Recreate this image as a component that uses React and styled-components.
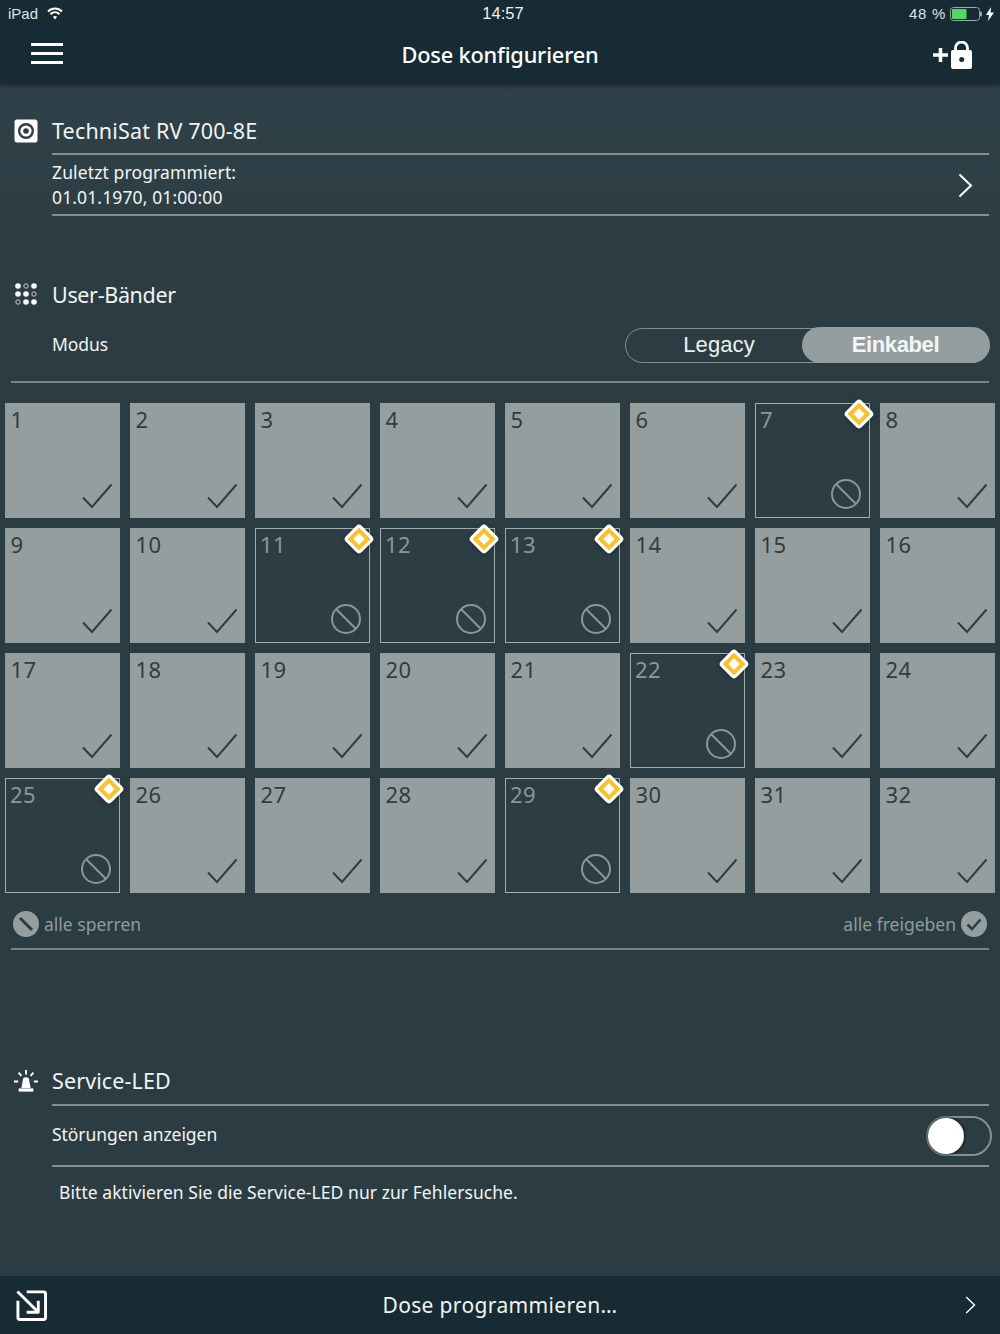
import React from 'react'
import styled, { createGlobalStyle } from 'styled-components'

const Global = createGlobalStyle`
    html, body { margin: 0; padding: 0; background: #2c3d44; }
    * { box-sizing: border-box; }
`

const Page = styled.div`
    width: 1000px;
    height: 1334px;
    display: flex;
    flex-direction: column;
    background: linear-gradient(#2f4148 84px, #2c3c43 300px);
    font-family: "Noto Sans", sans-serif;
    color: #f2f4f4;
    overflow: hidden;
`
const Header = styled.header`
    height: 84px;
    flex: none;
    background: #162b33;
    box-shadow: 0 2px 5px rgba(0, 0, 0, 0.35);
    position: relative;
`
const StatusBar = styled.div`
    height: 27px;
    padding: 0 6px 0 8px;
    display: grid;
    grid-template-columns: 1fr auto 1fr;
    align-items: center;
    font-family: "Liberation Sans", sans-serif;
    font-size: 15px;
    color: #dfe3e4;
`
const StatusLeft = styled.div`
    display: flex;
    align-items: center;
    gap: 9px;
`
const StatusRight = styled.div`
    display: flex;
    align-items: center;
    justify-content: flex-end;
    gap: 4px;
    letter-spacing: 0.7px;
`
const Clock = styled.span`
    font-size: 16.5px;
    margin-left: 4px;
    color: #eef1f1;
`
const NavBar = styled.div`
    height: 57px;
    padding: 0 27px;
    display: grid;
    grid-template-columns: 1fr auto 1fr;
    align-items: center;
`
const NavTitle = styled.h1`
    margin: 0 0 2px 0;
    font-size: 21.8px;
    font-weight: 500;
    color: #fff;
    letter-spacing: -0.2px;
`
const NavEnd = styled.div`
    display: flex;
    justify-content: flex-end;
    margin-bottom: 2px;
`
const NavStart = styled.div`
    display: flex;
    padding-left: 4px;
    margin-bottom: 5px;
`
const Main = styled.main`
    flex: 1;
    display: flex;
    flex-direction: column;
    min-height: 0;
`
const Section = styled.section`
    margin-top: ${(p) => p.$top}px;
`
const SectionHead = styled.div`
    display: flex;
    align-items: center;
    height: ${(p) => p.$h}px;
    padding-left: 14px;
`
const HeadIcon = styled.div`
    width: 24px;
    height: 24px;
    margin-right: 14px;
    display: flex;
    align-items: center;
    justify-content: center;
    flex: none;
`
const HeadText = styled.h2`
    margin: 0 0 ${(p) => p.$lift ?? 2}px 0;
    font-size: 21.5px;
    font-weight: 400;
    letter-spacing: ${(p) => p.$track}px;
    color: #f2f4f4;
`
const InsetRule = styled.div`
    height: 2px;
    background: #84908f;
    margin: 0 11px 0 52px;
`
const WideRule = styled.div`
    height: 2px;
    background: #76858a;
    margin: 0 11px;
`
const InfoRow = styled.div`
    height: 59px;
    margin: 0 27px 0 52px;
    display: flex;
    align-items: center;
    justify-content: space-between;
`
const InfoText = styled.div`
    font-size: 17.5px;
    line-height: 25px;
    letter-spacing: 0.12px;
`
const InfoArrow = styled.div`
    display: flex;
    margin-top: 2px;
`
const ModeRow = styled.div`
    height: 62px;
    margin: 0 11px 5px 52px;
    display: flex;
    align-items: center;
    justify-content: space-between;
`
const RowLabel = styled.span`
    font-size: 17.5px;
    letter-spacing: -0.05px;
    margin-bottom: ${(p) => p.$lift}px;
`
const Segments = styled.div`
    width: 364px;
    height: 35px;
    display: flex;
    border: 1.5px solid #84908f;
    border-radius: 18px;
`
const Segment = styled.div`
    margin: -1.5px;
    display: flex;
    align-items: center;
    justify-content: center;
    border-radius: 18px;
    font-family: "Liberation Sans", sans-serif;
    font-size: 22px;
`
const SegmentOff = styled(Segment)`
    flex: 0 0 180px;
    padding-left: 9px;
    letter-spacing: 0.1px;
    color: #eef1f1;
`
const SegmentOn = styled(Segment)`
    flex: 1;
    letter-spacing: -0.4px;
    font-weight: 700;
    background: #959e9f;
    color: #f4f6f6;
`
const Grid = styled.div`
    margin: 20px 0 0 5px;
    display: grid;
    grid-template-columns: repeat(8, 115px);
    grid-auto-rows: 115px;
    gap: 10px;
`
const Cell = styled.div`
    position: relative;
    background: ${(p) => (p.$blocked ? '#2c3d44' : '#959e9f')};
    border: ${(p) => (p.$blocked ? '1px solid #a3adae' : 'none')};
    color: ${(p) => (p.$blocked ? '#8b9698' : '#2c3d44')};
`
const CellNumber = styled.span`
    position: absolute;
    left: ${(p) => (p.$blocked ? 4 : 5.5)}px;
    top: ${(p) => (p.$blocked ? 0 : 1)}px;
    font-size: 22px;
    line-height: 30px;
    letter-spacing: 0.5px;
`
const CellMark = styled.div`
    position: absolute;
    right: ${(p) => (p.$blocked ? 8 : 7)}px;
    bottom: ${(p) => (p.$blocked ? 8 : 9)}px;
    display: flex;
`
const Badge = styled.svg`
    position: absolute;
    right: -7px;
    top: -7px;
    display: block;
    filter: drop-shadow(0 1px 2px rgba(0, 0, 0, 0.3));
`
const BulkRow = styled.div`
    height: 55px;
    padding-top: 7px;
    margin: 0 13px;
    display: flex;
    align-items: center;
    justify-content: space-between;
    color: #8f9b9d;
    font-size: 17.5px;
`
const BulkAction = styled.div`
    display: flex;
    align-items: center;
    gap: 5px;
`
const Switch = styled.div`
    width: 66px;
    height: 40px;
    border: 2px solid #84908f;
    border-radius: 20px;
    position: relative;
`
const Knob = styled.div`
    position: absolute;
    left: 0;
    top: 0;
    width: 36px;
    height: 36px;
    border-radius: 50%;
    background: #fff;
    box-shadow: 0 0 3px 1px rgba(0, 0, 0, 0.55);
`
const SwitchRow = styled(ModeRow)`
    height: 59px;
    margin: 0 8px 0 52px;
`
const Note = styled.p`
    margin: 13px 0 0 59px;
    font-size: 17.5px;
    line-height: 25px;
    letter-spacing: 0.06px;
`
const Footer = styled.footer`
    height: 58px;
    flex: none;
    background: #162b33;
    display: grid;
    grid-template-columns: 1fr auto 1fr;
    align-items: center;
    padding: 0 15px;
`
const FooterTitle = styled.span`
    font-size: 21px;
    letter-spacing: 0.35px;
    color: #f2f4f4;
`
const FooterEnd = styled.div`
    display: flex;
    justify-content: flex-end;
    padding-right: 9px;
`

const Wifi = () => (
    <svg width="16" height="13" viewBox="0 0 16 13" fill="none" stroke="#fff" strokeWidth="2">
        <path d="M1 4.500c4-4 10-4 14 0" />
        <path d="M3.500 7.200c2.600-2.600 6.400-2.600 9 0" />
        <path d="M8 12.500 5.900 9.800c1.200-1 3-1 4.200 0z" fill="#fff" stroke="none" />
    </svg>
)
const Battery = () => (
    <svg width="32" height="14" viewBox="0 0 32 14" fill="none">
        <rect x="0.500" y="0.500" width="29" height="13" rx="3" stroke="#9aa5a8" />
        <rect x="2" y="2" width="14.500" height="10" rx="1" fill="#4cd964" />
        <rect x="30" y="4.500" width="2" height="5" rx="1" fill="#9aa5a8" />
    </svg>
)
const Bolt = () => (
    <svg width="8" height="14" viewBox="0 0 8 14">
        <path d="M5 0 0 8h3l-1 6 6-8.500H4.600z" fill="#fff" />
    </svg>
)
const Burger = () => (
    <svg width="32" height="21" viewBox="0 0 32 21" fill="#fff">
        <rect y="0" width="32" height="3" />
        <rect y="9" width="32" height="3" />
        <rect y="18" width="32" height="3" />
    </svg>
)
const AddLock = () => (
    <svg width="40" height="28" viewBox="0 0 40 28">
        <path d="M0 14h15M7.500 7v14" stroke="#fff" strokeWidth="3.500" />
        <path d="M22.500 10V7a6 6 0 0 1 12 0v3" stroke="#fff" strokeWidth="2.800" fill="none" />
        <rect x="18" y="9" width="21" height="19" rx="2" fill="#fff" />
        <circle cx="28.700" cy="18.500" r="2.500" fill="#162b33" />
    </svg>
)
const DeviceIcon = () => (
    <svg width="24" height="24" viewBox="0 0 24 24">
        <rect x="0.500" y="0.500" width="23" height="23" rx="2.500" fill="#fff" />
        <circle cx="12" cy="12" r="6.800" fill="none" stroke="#2c3d44" strokeWidth="2.400" />
        <circle cx="12" cy="12" r="2.800" fill="#2c3d44" />
    </svg>
)
const Chevron = ({ w = 15, h = 25 }) => (
    <svg width={w} height={h} viewBox="0 0 15 25" fill="none" stroke="#fff" strokeWidth="2">
        <path d="M1.500 1.500 13 12.500 1.500 23.500" />
    </svg>
)

// 3x3 dot matrix, some dots only outlined
const hollow = [1, 5, 6]
const DotsIcon = () => (
    <svg width="22" height="22" viewBox="0 0 22 22">
        {Array.from({ length: 9 }, (_, i) => (
            <circle
                key={i}
                cx={3 + (i % 3) * 8}
                cy={3 + Math.floor(i / 3) * 8}
                r={hollow.includes(i) ? 2.200 : 2.800}
                fill={hollow.includes(i) ? 'none' : '#fff'}
                stroke={hollow.includes(i) ? '#c5cbcc' : 'none'}
            />
        ))}
    </svg>
)
const Check = () => (
    <svg width="32" height="26" viewBox="0 0 32 26" fill="none" stroke="#2c3d44" strokeWidth="2">
        <path d="M2 14.500 11 24 30.500 1.500" />
    </svg>
)
const Blocked = () => (
    <svg width="30" height="30" viewBox="0 0 30 30" fill="none" stroke="#8b9698" strokeWidth="2">
        <circle cx="15" cy="15" r="14" />
        <path d="M5.500 5.500l19 19" />
    </svg>
)
const Warning = () => (
    <Badge width="34" height="34" viewBox="0 0 34 34">
        <rect x="7.300" y="7.300" width="19.400" height="19.400" rx="2.500" transform="rotate(45 17 17)" fill="#f8c22e" stroke="#fff" strokeWidth="3.100" />
        <rect x="13" y="13" width="8" height="8" transform="rotate(45 17 17)" fill="#fff" />
    </Badge>
)
const LockAll = () => (
    <svg width="26" height="26" viewBox="0 0 26 26">
        <circle cx="13" cy="13" r="13" fill="#959e9f" />
        <path d="M7 7l12 12" stroke="#2c3d44" strokeWidth="3" />
    </svg>
)
const FreeAll = () => (
    <svg width="26" height="26" viewBox="0 0 26 26" fill="none">
        <circle cx="13" cy="13" r="13" fill="#959e9f" />
        <path d="M6.500 13.500 11 18l8.500-9.500" stroke="#2c3d44" strokeWidth="2.600" />
    </svg>
)
const Beacon = () => (
    <svg width="26" height="24" viewBox="0 0 26 24" fill="#fff">
        <path d="M8 19.500 9.500 11.500a3.500 3.500 0 0 1 7 0L18 19.500z" />
        <rect x="5" y="20" width="16" height="3.500" />
        <path d="M13 0v5M5 3l3 3.500M21 3l-3 3.500M0 12.500h4.500M21.500 12.500H26" stroke="#fff" strokeWidth="2" fill="none" />
    </svg>
)
const ExitIcon = () => (
    <svg width="32" height="32" viewBox="0 0 33 33" fill="none" stroke="#fff" strokeWidth="3" strokeLinejoin="round">
        <path d="M12 3h17.500a2 2 0 0 1 2 2v24.500a2 2 0 0 1-2 2H5a2 2 0 0 1-2-2V12" />
        <path d="M2.500 2.500 23 23" />
        <path d="M12 24h12V12" />
    </svg>
)

const blockedBands = [7, 11, 12, 13, 22, 25, 29]
const bands = Array.from({ length: 32 }, (_, i) => i + 1)

const App = () => (
    <Page>
        <Global />
        <Header>
            <StatusBar>
                <StatusLeft>iPad <Wifi /></StatusLeft>
                <Clock>14:57</Clock>
                <StatusRight>48 % <Battery /> <Bolt /></StatusRight>
            </StatusBar>
            <NavBar>
                <NavStart><Burger /></NavStart>
                <NavTitle>Dose konfigurieren</NavTitle>
                <NavEnd><AddLock /></NavEnd>
            </NavBar>
        </Header>
        <Main>
            <Section $top={25}>
                <SectionHead $h={44}>
                    <HeadIcon><DeviceIcon /></HeadIcon>
                    <HeadText $track={0.17}>TechniSat RV 700-8E</HeadText>
                </SectionHead>
                <InsetRule />
                <InfoRow>
                    <InfoText>Zuletzt programmiert:<br />01.01.1970, 01:00:00</InfoText>
                    <InfoArrow><Chevron /></InfoArrow>
                </InfoRow>
                <InsetRule />
            </Section>
            <Section $top={58}>
                <SectionHead $h={40}>
                    <HeadIcon><DotsIcon /></HeadIcon>
                    <HeadText $track={-0.34} $lift={0}>User-Bänder</HeadText>
                </SectionHead>
                <ModeRow>
                    <RowLabel $lift={2}>Modus</RowLabel>
                    <Segments>
                        <SegmentOff>Legacy</SegmentOff>
                        <SegmentOn>Einkabel</SegmentOn>
                    </Segments>
                </ModeRow>
                <WideRule />
                <Grid>
                    {bands.map((n) => {
                        const blocked = blockedBands.includes(n)
                        return (
                            <Cell key={n} $blocked={blocked}>
                                <CellNumber $blocked={blocked}>{n}</CellNumber>
                                <CellMark $blocked={blocked}>{blocked ? <Blocked /> : <Check />}</CellMark>
                                {blocked && <Warning />}
                            </Cell>
                        )
                    })}
                </Grid>
                <BulkRow>
                    <BulkAction><LockAll /> alle sperren</BulkAction>
                    <BulkAction>alle freigeben <FreeAll /></BulkAction>
                </BulkRow>
                <WideRule />
            </Section>
            <Section $top={108}>
                <SectionHead $h={46}>
                    <HeadIcon><Beacon /></HeadIcon>
                    <HeadText $track={0.11}>Service-LED</HeadText>
                </SectionHead>
                <InsetRule />
                <SwitchRow>
                    <RowLabel $lift={4}>Störungen anzeigen</RowLabel>
                    <Switch><Knob /></Switch>
                </SwitchRow>
                <InsetRule />
                <Note>Bitte aktivieren Sie die Service-LED nur zur Fehlersuche.</Note>
            </Section>
        </Main>
        <Footer>
            <ExitIcon />
            <FooterTitle>Dose programmieren…</FooterTitle>
            <FooterEnd><Chevron w={11} h={18} /></FooterEnd>
        </Footer>
    </Page>
)

export default App
